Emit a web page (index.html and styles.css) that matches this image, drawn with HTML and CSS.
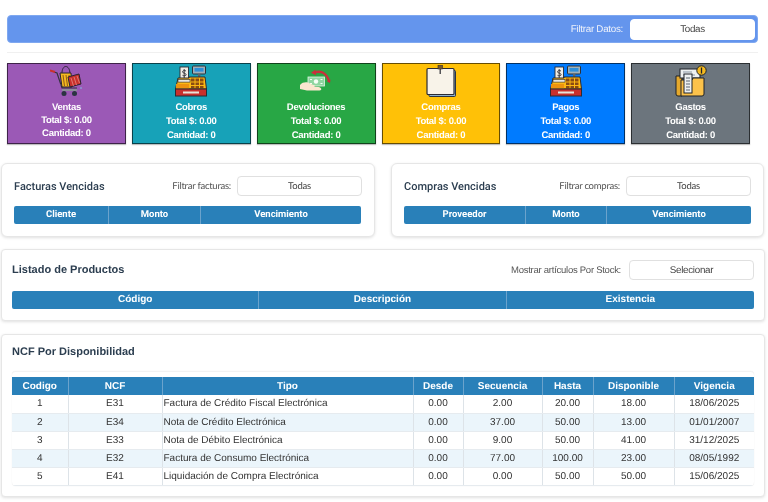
FILE: index.html
```html
<!DOCTYPE html>
<html lang="es">
<head>
<meta charset="utf-8">
<title>Panel</title>
<link rel="stylesheet" href="styles.css">
</head>
<body>
<svg class="defs" width="0" height="0" aria-hidden="true">
  <defs>
    <symbol id="register" viewBox="0 0 32 32">
      <rect x="5" y="2" width="8.500" height="14" fill="#f1eee6" stroke="#2b2b33" stroke-width=".9"/>
      <path d="M9.200 4v9M11 6c-1.800-1.100-3.600-.2-3.400 1 .2 1.500 3.600 1 3.500 2.700-.1 1.200-2 1.500-3.600.6" fill="none" stroke="#2b2b33" stroke-width=".9"/>
      <rect x="17.500" y="1" width="13" height="8" rx="1" fill="#9fb0b8" stroke="#2b3038"/>
      <rect x="19.500" y="3" width="9" height="3.600" fill="#2f8fd8"/>
      <path d="M23 9h2.400v3H23z" fill="#59666e"/>
      <path d="M3 13h11v-1h16l1.500 12H.5z" fill="#fdb813" stroke="#2b2b33"/>
      <path d="M1 19h13v4.500H1z" fill="#ee930f"/>
      <rect x="3" y="14.500" width="12" height="2.600" fill="#e9e6de" stroke="#2b2b33" stroke-width=".6"/>
      <path d="M16 13.500h3.500v3H16zM20.500 13.500H24v3h-3.500zM25 13.500h3.500v3H25zM16 17.500h3.500v2.500H16zM20.500 17.500H24v2.500h-3.500zM25 17.500h3.500v2.500H25zM16 21h3.500v2.500H16zM20.500 21H24v2.500h-3.500zM25 21h3.500v2.500H25z" fill="#8a4b12"/>
      <rect x=".5" y="24" width="31" height="7" fill="#c9302c" stroke="#2b2b33"/>
      <rect x="8" y="26.500" width="16" height="2" fill="#e8e3d8"/>
    </symbol>
  </defs>
</svg>
<main class="page">
  <section class="overview">
    <div class="filter-bar">
      <label class="filter-bar-label">Filtrar Datos:</label>
      <div class="picker picker-top">Todas</div>
    </div>
    <hr class="rule">
    <div class="cards">
      <article class="card card-purple card-tight">
        <svg class="card-icon" viewBox="0 0 32 32" aria-hidden="true">
          <path d="M4 7l3 1 5 15h15" fill="none" stroke="#33323f" stroke-width="1.200"/>
          <path d="M0 5.500l5 1.500" stroke="#c9302c" stroke-width="2"/>
          <path d="M10 20l16 .5" stroke="#6d6a78" stroke-width="1"/>
          <path d="M12 9c-.5-10 8-10 8 0" fill="none" stroke="#2b2433" stroke-width="1"/>
          <path d="M10 8h11l1 14H12z" fill="#f5b91f" stroke="#2b2433"/>
          <path d="M13 10l1.500 11M16 10l1.500 11M19 10l1.500 11" stroke="#8c5a1a" stroke-width="1"/>
          <path d="M18 12l11-3 2 10-11 3z" fill="#c9302c" stroke="#2b2433"/>
          <path d="M21 13l2.500 8M24 12l2.500 8M27 11l2.500 7" stroke="#e89a90" stroke-width=".7"/>
          <path d="M12 25h15" stroke="#8f8d9c" stroke-width="2"/>
          <circle cx="14" cy="28.500" r="2.500" fill="#2b3442"/>
          <circle cx="24.500" cy="28.500" r="2.500" fill="#2b3442"/>
          <circle cx="31" cy="23" r=".8" fill="#7fc4e8"/>
        </svg>
        <h3 class="card-title">Ventas</h3>
        <p class="card-line">Total $: 0.00</p>
        <p class="card-line">Cantidad: 0</p>
      </article>
      <article class="card card-teal">
        <svg class="card-icon" viewBox="0 0 32 32" aria-hidden="true"><use href="#register"/></svg>
        <h3 class="card-title">Cobros</h3>
        <p class="card-line">Total $: 0.00</p>
        <p class="card-line">Cantidad: 0</p>
      </article>
      <article class="card card-green">
        <svg class="card-icon" viewBox="0 0 32 32" aria-hidden="true">
          <path d="M14 8c6-3 12-1 15 8" fill="none" stroke="#c9303c" stroke-width="2.400"/>
          <path d="M15.500 4.500L11 7.800l5 2.500z" fill="#c9303c"/>
          <path d="M27 16.500l3 1.500.5-3.500z" fill="#c9303c"/>
          <rect x="8" y="12" width="16.500" height="9" fill="#8fd6a0" stroke="#e4f6e6" stroke-width=".8"/>
          <circle cx="16" cy="16.500" r="2.200" fill="#f6fff6"/>
          <path d="M10 14.500h2M20.500 18.500h2M10 18.500h2M20.500 14.500h2" stroke="#f2fff2"/>
          <path d="M0 20c2-2.500 5-3 8-2.500l4 2 2.500.8c1 .5 0 1.800-1 1.500l5 .2c3 .2 4 3.500 1 3.500H7l-7-1.500z" fill="#fbe6cf"/>
        </svg>
        <h3 class="card-title">Devoluciones</h3>
        <p class="card-line">Total $: 0.00</p>
        <p class="card-line">Cantidad: 0</p>
      </article>
      <article class="card card-yellow">
        <svg class="card-icon" viewBox="0 0 32 32" aria-hidden="true">
          <rect x="4" y="5.500" width="26.500" height="26" rx="1" fill="#8fb3d0" stroke="#2b3442"/>
          <rect x="2" y="3.500" width="27" height="26" rx="1" fill="#f8f3e9" stroke="#2b2b33" stroke-width="1.200"/>
          <rect x="13" y="0" width="4.500" height="4" fill="#7a5a2a" stroke="#2b2b33" stroke-width=".6"/>
          <path d="M15.200 4v5" stroke="#2b2b33" stroke-width="1.200"/>
        </svg>
        <h3 class="card-title">Compras</h3>
        <p class="card-line">Total $: 0.00</p>
        <p class="card-line">Cantidad: 0</p>
      </article>
      <article class="card card-blue">
        <svg class="card-icon" viewBox="0 0 32 32" aria-hidden="true"><use href="#register"/></svg>
        <h3 class="card-title">Pagos</h3>
        <p class="card-line">Total $: 0.00</p>
        <p class="card-line">Cantidad: 0</p>
      </article>
      <article class="card card-gray">
        <svg class="card-icon" viewBox="0 0 32 32" aria-hidden="true">
          <path d="M1 11h6v20H3a2 2 0 0 1-2-2z" fill="#e6a92c" stroke="#1f2328"/>
          <rect x="5" y="4" width="20" height="9" fill="#eef1f2" stroke="#1f2328"/>
          <path d="M8 7h9M8 10h12" stroke="#8a98a3" stroke-width="1.200"/>
          <path d="M6 15h11l1-2h11v16a2 2 0 0 1-2 2H6z" fill="#fcc24a" stroke="#1f2328"/>
          <rect x="9" y="9" width="8" height="19" fill="#eef1f2" stroke="#1f2328"/>
          <path d="M11 13h4M11 16h4M11 19h4M11 22h4M11 25h4" stroke="#5b6770" stroke-width="1.200"/>
          <circle cx="26.500" cy="5.500" r="4.700" fill="#f5b91f" stroke="#1f2328"/>
          <path d="M26.500 2.500v6" stroke="#1f2328" stroke-width="1.300"/>
        </svg>
        <h3 class="card-title">Gastos</h3>
        <p class="card-line">Total $: 0.00</p>
        <p class="card-line">Cantidad: 0</p>
      </article>
    </div>
  </section>

  <section class="split">
    <div class="panel panel-small">
      <header class="panel-head">
        <h2 class="small-title">Facturas Vencidas</h2>
        <div class="filter">
          <span class="filter-label">Filtrar facturas:</span>
          <div class="picker picker-small">Todas</div>
        </div>
      </header>
      <table class="mini-table">
        <colgroup><col class="fc-1"><col class="fc-2"><col class="fc-3"></colgroup>
        <thead><tr><th>Cliente</th><th>Monto</th><th>Vencimiento</th></tr></thead>
      </table>
    </div>
    <div class="panel panel-small">
      <header class="panel-head">
        <h2 class="small-title">Compras Vencidas</h2>
        <div class="filter">
          <span class="filter-label">Filtrar compras:</span>
          <div class="picker picker-small">Todas</div>
        </div>
      </header>
      <table class="mini-table">
        <colgroup><col class="cc-1"><col class="cc-2"><col class="cc-3"></colgroup>
        <thead><tr><th>Proveedor</th><th>Monto</th><th>Vencimiento</th></tr></thead>
      </table>
    </div>
  </section>

  <section class="panel panel-products">
    <header class="products-head">
      <h2 class="wide-title">Listado de Productos</h2>
      <div class="filter filter-wide">
        <span class="wide-label">Mostrar artículos Por Stock:</span>
        <div class="picker picker-wide">Selecionar</div>
      </div>
    </header>
    <table class="products-table">
      <thead><tr><th>Código</th><th>Descripción</th><th>Existencia</th></tr></thead>
    </table>
  </section>

  <section class="panel panel-ncf">
    <h2 class="wide-title ncf-title">NCF Por Disponibilidad</h2>
    <div class="ncf-frame">
      <table class="ncf-table">
        <colgroup>
          <col class="n-1"><col class="n-2"><col class="n-3"><col class="n-4"><col class="n-5"><col class="n-6"><col class="n-7"><col class="n-8">
        </colgroup>
        <thead>
          <tr><th>Codigo</th><th>NCF</th><th>Tipo</th><th>Desde</th><th>Secuencia</th><th>Hasta</th><th>Disponible</th><th>Vigencia</th></tr>
        </thead>
        <tbody>
          <tr><td>1</td><td>E31</td><td class="left">Factura de Crédito Fiscal Electrónica</td><td>0.00</td><td>2.00</td><td>20.00</td><td>18.00</td><td>18/06/2025</td></tr>
          <tr><td>2</td><td>E34</td><td class="left">Nota de Crédito Electrónica</td><td>0.00</td><td>37.00</td><td>50.00</td><td>13.00</td><td>01/01/2007</td></tr>
          <tr><td>3</td><td>E33</td><td class="left">Nota de Débito Electrónica</td><td>0.00</td><td>9.00</td><td>50.00</td><td>41.00</td><td>31/12/2025</td></tr>
          <tr><td>4</td><td>E32</td><td class="left">Factura de Consumo Electrónica</td><td>0.00</td><td>77.00</td><td>100.00</td><td>23.00</td><td>08/05/1992</td></tr>
          <tr><td>5</td><td>E41</td><td class="left">Liquidación de Compra Electrónica</td><td>0.00</td><td>0.00</td><td>50.00</td><td>50.00</td><td>15/06/2025</td></tr>
        </tbody>
      </table>
    </div>
  </section>
</main>
</body>
</html>
```
FILE: styles.css
```css
* { box-sizing: border-box; }
html, body { margin: 0; padding: 0; background: #fff; }
body { font-family: "Liberation Sans", Arial, sans-serif; color: #333; overflow: hidden; height: 502px; text-rendering: geometricPrecision; }
.defs { position: absolute; }
.page { padding: 15px 3px 0 1px; filter: blur(.25px); }

.overview { padding: 0 7px 0 6px; }
.filter-bar {
  height: 28px; background: #6495ed; border: 1px solid #7fa8f0; border-radius: 4px;
  display: flex; align-items: center; justify-content: flex-end; padding-right: 2px;
}
.filter-bar-label { color: #eef2fb; font-size: 9.800px; letter-spacing: -.28px; margin-right: 7px; }
.picker {
  background: #fff; border: 1px solid #e0e0e0; border-radius: 4px; display: flex;
  align-items: center; justify-content: center; color: #444; font-size: 9.800px; letter-spacing: -.28px;
}
.picker-top { width: 125px; height: 21px; border-color: #fff; }
.rule { border: 0; border-top: 1px solid #f0f0f0; margin: 9px 0 10px; }
.cards { display: grid; grid-template-columns: repeat(6, 1fr); gap: 6px; width: 743px; }
.card {
  height: 81px; border: 1px solid rgba(0,0,0,.6); box-shadow: 0 1px 1px rgba(0,0,0,.25);
  color: #fff; text-align: center; display: flex; flex-direction: column; align-items: center;
  padding-top: 1px;
}
.card-purple { background: #9b59b6; }
.card-teal { background: #17a2b8; }
.card-green { background: #28a745; }
.card-yellow { background: #ffc107; }
.card-blue { background: #007bff; }
.card-gray { background: #6c757d; }
.card-icon { width: 32px; height: 32px; display: block; }
.card-title { margin: 4px 0 0; font-size: 9.500px; letter-spacing: -.28px; font-weight: 700; line-height: 13px; }
.card-line { margin: 1px 0 0; font-size: 9.500px; letter-spacing: -.28px; font-weight: 700; line-height: 13px; }
.card-tight .card-line { margin-top: 0; }

.split { display: grid; grid-template-columns: 374px 373px; gap: 16px; margin-top: 19px; }
.panel { background: #fff; border: 1px solid #e6e6e6; border-radius: 4px; box-shadow: 0 1px 3px rgba(0,0,0,.12); }
.panel-small { height: 74px; padding: 12px 12px 0 12px; border-radius: 6px; }
.panel-head { display: flex; align-items: center; justify-content: space-between; height: 20px; }
.small-title { margin: 1px 0 0; font: 500 11px Roboto, sans-serif; color: #2c3e50; }
.filter { display: flex; align-items: center; }
.filter-label { margin-top: 1px; font: 400 9.500px Lato, sans-serif; letter-spacing: -.25px; color: #555; margin-right: 6px; }
.picker-small { width: 125px; height: 20px; font: 400 9.500px Lato, sans-serif; letter-spacing: -.2px; }
.mini-table { width: 347px; table-layout: fixed; border-collapse: separate; border-spacing: 0; margin-top: 10px; border-radius: 2px; overflow: hidden; }
.mini-table th { background: #2980b9; color: #fff; font: 700 9.500px/18px Roboto, sans-serif; height: 17px; padding: 0; border-right: 1px solid #6ba3cc; }
.mini-table th:last-child { border-right: 0; }
.fc-1 { width: 95px; } .fc-2 { width: 92px; } .fc-3 { width: 160px; }
.cc-1 { width: 122px; } .cc-2 { width: 81px; } .cc-3 { width: 144px; }

.panel-products { margin-top: 12px; height: 72px; padding: 10px 10px 0; }
.products-head { display: flex; align-items: center; justify-content: space-between; height: 20px; }
.wide-title { margin: 0; font-size: 11px; font-weight: 700; color: #2c3e50; }
.wide-label { font-size: 9.500px; letter-spacing: -.26px; color: #555; margin-right: 8px; }
.picker-wide { width: 125px; height: 20px; }
.products-table { width: 742px; table-layout: fixed; border-collapse: separate; border-spacing: 0; margin-top: 11px; border-radius: 2px; overflow: hidden; }
.products-table th { background: #2980b9; color: #fff; font-size: 10px; font-weight: 700; height: 18px; line-height: 18px; padding: 0; border-right: 1px solid #6ba3cc; }
.products-table th:last-child { border-right: 0; }

.panel-ncf { margin-top: 13px; height: 163px; padding: 10px 10px 0; }
.ncf-title { line-height: 14px; }
.ncf-frame { margin-top: 12px; border-radius: 4px; padding-top: 5px; border-top: 1px solid #f2f2f2; width: 742px; box-shadow: 0 0 1px rgba(0,0,0,.15); overflow: hidden; }
.ncf-table { width: 742px; table-layout: fixed; border-collapse: collapse; }
.ncf-table th { background: #2980b9; color: #fff; font-size: 10px; font-weight: 700; height: 18px; padding: 0; border-right: 1px solid #6ba3cc; text-align: center; }
.ncf-table td { font-size: 10px; color: #333; height: 18px; padding: 0; border-right: 1px solid #dde3e8; border-bottom: 1px solid #e6ebef; text-align: center; }
.ncf-table tbody tr:nth-child(even) td { background: #ebf5fb; }
.ncf-table td.left { text-align: left; padding-left: 1px; }
.ncf-table th:last-child, .ncf-table td:last-child { border-right: 0; }
.n-1 { width: 56px; } .n-2 { width: 94px; } .n-3 { width: 251px; } .n-4 { width: 50px; }
.n-5 { width: 79px; } .n-6 { width: 51px; } .n-7 { width: 81px; } .n-8 { width: 80px; }
```
